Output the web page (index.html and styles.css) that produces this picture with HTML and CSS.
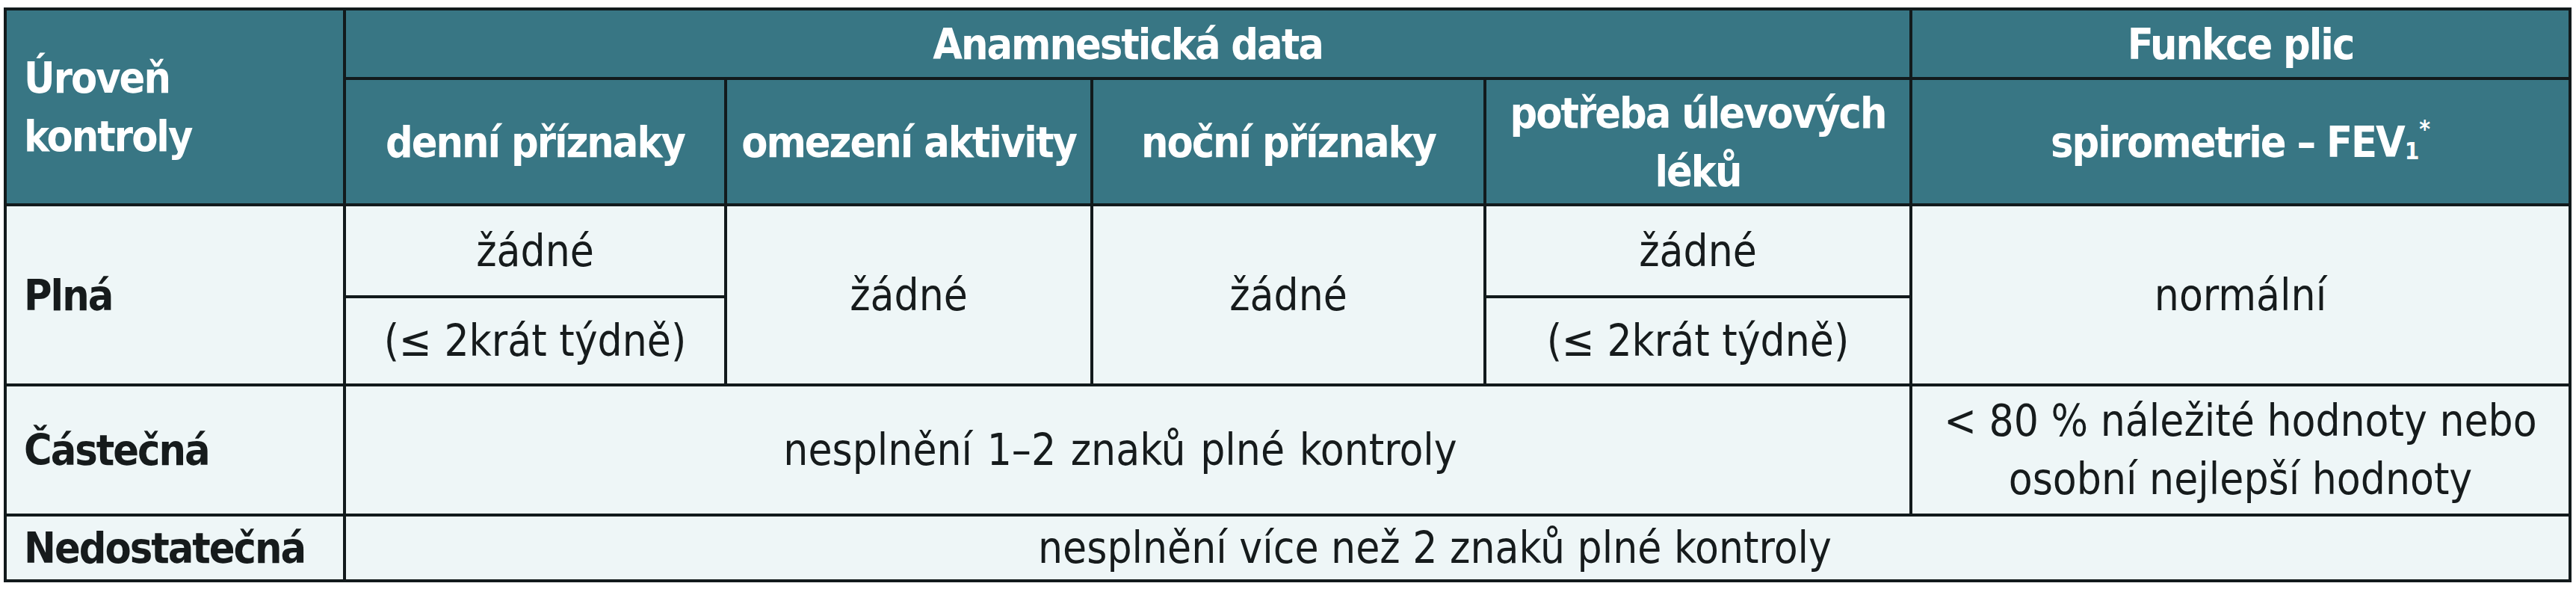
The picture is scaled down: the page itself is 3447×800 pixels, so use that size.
FILE: index.html
```html
<!DOCTYPE html>
<html lang="cs">
<head>
<meta charset="utf-8">
<title>Úroveň kontroly</title>
<link rel="stylesheet" href="styles.css">
</head>
<body>
<div class="tbl">
  <div class="c hd left c1 r12">Úroveň<br>kontroly</div>
  <div class="c hd c25 r1">Anamnestická data</div>
  <div class="c hd c6 r1">Funkce plic</div>
  <div class="c hd c2 r2">denní příznaky</div>
  <div class="c hd c3 r2">omezení aktivity</div>
  <div class="c hd c4 r2">noční příznaky</div>
  <div class="c hd c5 r2">potřeba úlevových<br>léků</div>
  <div class="c hd c6 r2">spirometrie – FEV<sub>1</sub><sup>*</sup></div>

  <div class="c lbl left c1 r34">Plná</div>
  <div class="c c2 r3">žádné</div>
  <div class="c c2 r4">(≤ 2krát týdně)</div>
  <div class="c c3 r34">žádné</div>
  <div class="c c4 r34">žádné</div>
  <div class="c c5 r3">žádné</div>
  <div class="c c5 r4">(≤ 2krát týdně)</div>
  <div class="c c6 r34">normální</div>

  <div class="c lbl left c1 r5">Částečná</div>
  <div class="c c25 r5 shift-a">nesplnění 1–2 znaků plné kontroly</div>
  <div class="c c6 r5">&lt; 80 % náležité hodnoty nebo<br>osobní nejlepší hodnoty</div>

  <div class="c lbl left c1 r6">Nedostatečná</div>
  <div class="c c26 r6 shift-b">nesplnění více než 2 znaků plné kontroly</div>
</div>
</body>
</html>
```
FILE: styles.css
```css
html, body {
  margin: 0;
  padding: 0;
  background: #ffffff;
}

.tbl {
  display: grid;
  grid-template-columns: 450px 506px 486px 522px 566px 878px;
  grid-template-rows: 89px 165px 119px 114px 170px 84px;
  gap: 4px;
  padding: 4px;
  margin: 10px 0 0 5px;
  width: max-content;
  background: #121a1c;
  font-family: "DejaVu Sans Condensed", "Liberation Sans", sans-serif;
  font-size: 58px;
  line-height: 78px;
  color: #161b1c;
}

.c {
  display: flex;
  align-items: center;
  justify-content: center;
  text-align: center;
  background: #eef6f7;
  white-space: nowrap;
}

.hd {
  background: #387684;
  color: #ffffff;
  font-weight: bold;
  font-size: 57px;
  letter-spacing: -2px;
}

.lbl {
  font-weight: bold;
  font-size: 57px;
  letter-spacing: -2px;
}

.left {
  justify-content: flex-start;
  text-align: left;
  padding-left: 23px;
}

.shift-a {
  padding-right: 20px;
  word-spacing: 3px;
}

.shift-b {
  padding-right: 60px;
}

.c1 { grid-column: 1; }
.c2 { grid-column: 2; }
.c3 { grid-column: 3; }
.c4 { grid-column: 4; }
.c5 { grid-column: 5; }
.c6 { grid-column: 6; }
.c25 { grid-column: 2 / 6; }
.c26 { grid-column: 2 / 7; }

.r1 { grid-row: 1; }
.r2 { grid-row: 2; }
.r3 { grid-row: 3; }
.r4 { grid-row: 4; }
.r5 { grid-row: 5; }
.r6 { grid-row: 6; }
.r12 { grid-row: 1 / 3; }
.r34 { grid-row: 3 / 5; }

sub, sup {
  font-size: 0.55em;
  line-height: 0;
  position: relative;
  letter-spacing: 0;
}

sub { vertical-align: baseline; top: 0.4em; margin-left: 1px; }
sup { vertical-align: baseline; top: -0.55em; }
```
